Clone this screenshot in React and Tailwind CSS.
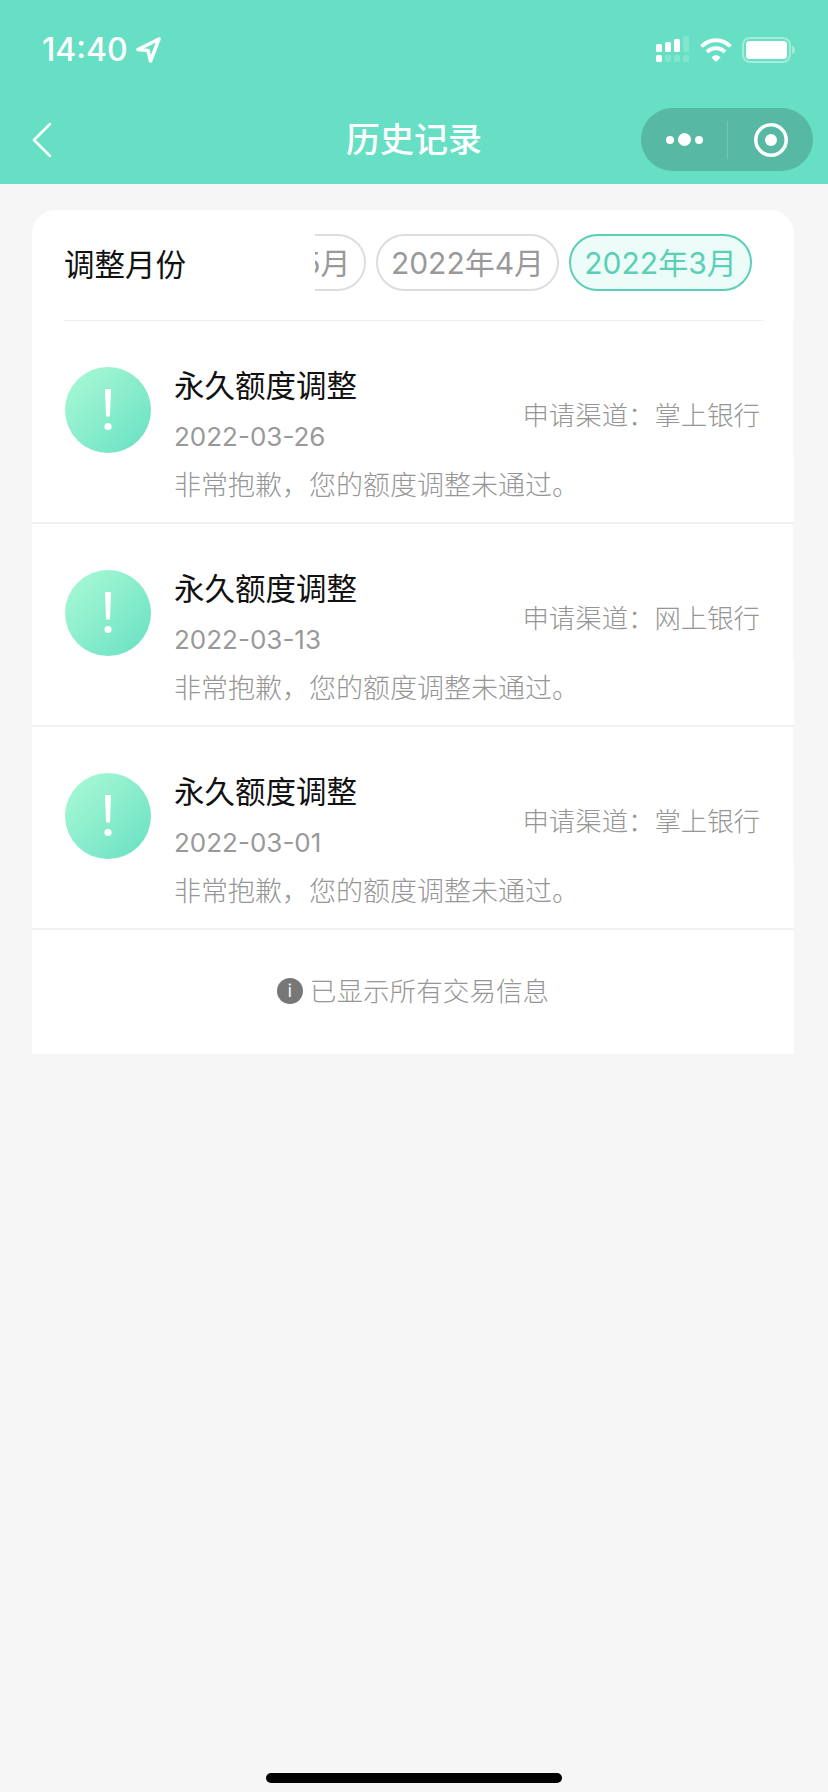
const font = { fontFamily: '"Inter","Noto Sans CJK SC",sans-serif' };

function Pill({ label, active }) {
  return (
    <div className={`flex h-[57px] w-[183px] shrink-0 items-center justify-center rounded-full border-2 text-[30px] leading-none ${active ? "border-[#5bcfb5] bg-[#ebfcf9] text-[#5bcfb5]" : "border-[#dddddd] bg-white text-[#999999]"}`}>
      {label}
    </div>
  );
}

function Item({ date, channel }) {
  return (
    <div className="flex h-[203px] flex-col border-b-2 border-[#f0f0f0] bg-[#fbfbfb]">
      <div className="mr-[2px] flex h-[135px] items-start bg-white pl-[33px]">
        <div className="mt-[46px] flex h-[86px] w-[86px] shrink-0 items-center justify-center rounded-full bg-gradient-to-br from-[#abfad6] to-[#64e0c2]">
          <svg width="10" height="42" viewBox="0 0 10 42" fill="#ffffff">
            <path d="M2 0h6L7 27.500H3z" />
            <circle cx="5" cy="37.500" r="3.600" />
          </svg>
        </div>
        <div className="ml-[23px] flex-1 pt-[45px]">
          <div className="text-[30.500px] leading-[40px] text-[#111111]">永久额度调整</div>
          <div className="mt-[13px] text-[26px] leading-[36px] text-[#999999]">{date}</div>
        </div>
        <div className="mr-[32px] mt-[76px] text-[26.400px] font-light leading-[36px] text-[#969696]">申请渠道：{channel}</div>
      </div>
      <div className="flex-1 bg-white pl-[142px] pt-[11px] text-[27px] font-light leading-[38px] text-[#969696]">非常抱歉，您的额度调整未通过。</div>
    </div>
  );
}

export default function App() {
  return (
    <div className="relative h-[1792px] w-[828px] overflow-hidden bg-[#f6f6f6]" style={font}>
      <header className="h-[184px] bg-[#66dfc4] text-white">
        <div className="flex h-[98px] items-start justify-between pl-[42px] pr-[32px] pt-[32px]">
          <div className="flex items-center gap-[7px]">
            <span className="text-[32px] font-medium leading-[36px]">14:40</span>
            <svg width="26" height="26" viewBox="0 0 26 26" fill="none" stroke="#ffffff" strokeWidth="3.500" strokeLinejoin="round">
              <path d="M24 2 3 12.500l10 1L15.500 24z" />
            </svg>
          </div>
          <div className="mt-[4px] flex items-center">
            <svg className="mr-[10px]" width="34" height="27" viewBox="0 0 34 27" fill="#ffffff">
              <rect x="0" y="8" width="6" height="8" rx="1.500" />
              <rect x="9" y="6" width="6" height="10" rx="1.500" />
              <rect x="18" y="3" width="6" height="13" rx="1.500" />
              <rect x="27" y="0" width="6" height="16" rx="1.500" opacity="0.2" />
              <rect x="0" y="19" width="6" height="7" rx="1.500" />
              <rect x="9" y="19" width="6" height="7" rx="1.500" opacity="0.2" />
              <rect x="18" y="19" width="6" height="7" rx="1.500" opacity="0.2" />
              <rect x="27" y="19" width="6" height="7" rx="1.500" opacity="0.2" />
            </svg>
            <svg className="mr-[10px]" width="32" height="25" viewBox="0 0 32 25" fill="none" stroke="#ffffff" strokeWidth="4">
              <path d="M1.500 9.500C9.500 1 22.500 1 30.500 9.500" />
              <path d="M7 15c5-5 13-5 18 0" />
              <path d="M12 20.500c2.500-2.300 5.500-2.300 8 0L16 24.500z" fill="#ffffff" strokeWidth="1" />
            </svg>
            <svg width="54" height="26" viewBox="0 0 54 26" fill="none">
              <rect x="1" y="1" width="47" height="24" rx="7" stroke="#ffffff" strokeOpacity="0.4" strokeWidth="2" />
              <rect x="4" y="4" width="41" height="18" rx="3.500" fill="#ffffff" />
              <path d="M50 9c2 .5 3 2 3 4s-1 3.500-3 4z" fill="#ffffff" fillOpacity="0.4" />
            </svg>
          </div>
        </div>
        <div className="relative flex h-[86px] items-start justify-center">
          <svg className="absolute left-[32px] top-[24px]" width="20" height="36" viewBox="0 0 20 36" fill="none" stroke="#ffffff" strokeWidth="2.500" strokeLinecap="round" strokeLinejoin="round">
            <path d="M18 2 2 18l16 16" />
          </svg>
          <div className="mt-[22px] text-[34px] font-medium leading-[40px]">历史记录</div>
          <div className="absolute left-[641px] top-[10px] flex h-[63px] w-[172px] items-center rounded-full bg-[#57b9a4]">
            <div className="flex w-[86px] items-center justify-center gap-[4px]">
              <span className="h-[8px] w-[8px] rounded-full bg-white" />
              <span className="h-[13px] w-[13px] rounded-full bg-white" />
              <span className="h-[8px] w-[8px] rounded-full bg-white" />
            </div>
            <div className="h-[38px] w-px bg-[#6fc8b3]" />
            <div className="flex flex-1 items-center justify-center">
              <svg width="34" height="34" viewBox="0 0 34 34" fill="none">
                <circle cx="17" cy="17" r="15.200" stroke="#ffffff" strokeWidth="3.500" />
                <circle cx="17" cy="17" r="6" fill="#ffffff" />
              </svg>
            </div>
          </div>
        </div>
      </header>

      <main className="ml-[32px] mt-[26px] h-[844px] w-[762px] overflow-hidden rounded-t-[24px] bg-white">
        <div className="flex h-[111px] items-start pl-[32px] pr-[42px] pt-[24px]">
          <div className="mt-[11px] text-[30.500px] leading-[40px] text-[#111111]">调整月份</div>
          <div className="ml-auto flex w-[437px] justify-end gap-[10px] overflow-hidden">
            <Pill label="2022年5月" />
            <Pill label="2022年4月" />
            <Pill label="2022年3月" active />
          </div>
        </div>
        <div className="-mt-px ml-[32px] mr-[31px] h-px bg-[#eeeeee]" />
        <Item date="2022-03-26" channel="掌上银行" />
        <Item date="2022-03-13" channel="网上银行" />
        <Item date="2022-03-01" channel="掌上银行" />
        <div className="flex h-[124px] items-center justify-center pb-[2px]">
          <div className="flex h-[26px] w-[26px] items-center justify-center rounded-full bg-[#777777] text-[17px] leading-none text-white">i</div>
          <div className="ml-[7px] text-[26.600px] font-light leading-[36px] text-[#969696]">已显示所有交易信息</div>
        </div>
      </main>

      <div className="absolute bottom-[9px] left-[266px] h-[10px] w-[296px] rounded-full bg-black" />
    </div>
  );
}
